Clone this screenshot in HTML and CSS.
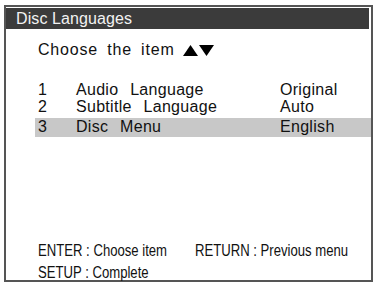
FILE: index.html
```html
<!DOCTYPE html>
<html>
<head>
<meta charset="utf-8">
<link rel="stylesheet" href="styles.css">
</head>
<body>
<div class="screen">
  <div class="titlebar">Disc Languages</div>
  <div class="prompt">Choose the item <span class="arrows"><svg width="32" height="13" viewBox="0 0 32 13"><polygon points="0,12 7.5,1 15,12" fill="#000"/><polygon points="16,1 31,1 23.5,12" fill="#000"/></svg></span></div>
  <div class="rows">
    <div class="row"><span class="num">1</span><span class="label">Audio Language</span><span class="value">Original</span></div>
    <div class="row"><span class="num">2</span><span class="label">Subtitle Language</span><span class="value">Auto</span></div>
    <div class="row selected"><span class="num">3</span><span class="label">Disc Menu</span><span class="value">English</span></div>
  </div>
  <div class="footer">
    <div class="fline"><span class="fa"><span class="narrow">ENTER : Choose item</span></span><span class="fb"><span class="narrow">RETURN : Previous menu</span></span></div>
    <div class="fline"><span class="fa"><span class="narrow">SETUP : Complete</span></span></div>
  </div>
</div>
</body>
</html>
```
FILE: styles.css
```css
html, body {
  margin: 0;
  padding: 0;
  background: #fff;
}
body {
  font-family: "Liberation Sans", Arial, sans-serif;
  color: #111;
}
.screen {
  margin: 5px 3px 0 4px;
  width: 365px;
  height: 273px;
  border: 2px solid #555;
  display: flex;
  flex-direction: column;
}
.titlebar {
  margin: 1px 2px 0 0;
  height: 21px;
  background: #3b3b3b;
  color: #f2f2f2;
  font-size: 16px;
  line-height: 21px;
  padding-left: 10px;
  letter-spacing: 0.1px;
}
.prompt {
  margin-top: 12px;
  padding-left: 32px;
  font-size: 16px;
  line-height: 18px;
  letter-spacing: 0.8px;
  word-spacing: 4px;
  display: flex;
  align-items: center;
}
.arrows {
  display: inline-flex;
  margin-left: 8px;
}
.rows {
  margin-top: 22px;
  margin-left: 29px;
  font-size: 16px;
  letter-spacing: 0.3px;
  word-spacing: 7px;
}
.row {
  display: flex;
  height: 17px;
  line-height: 17px;
  padding-left: 3px;
}
.row.selected {
  background: #c8c8c8;
  height: 19px;
  margin-top: 3px;
}
.num { width: 38px; }
.label { width: 204px; }
.footer {
  margin-top: auto;
  margin-bottom: -4px;
  padding-left: 32px;
  font-size: 16px;
  line-height: 22px;
}
.fline {
  display: flex;
  white-space: nowrap;
}
.fa { width: 163px; }
.narrow {
  display: inline-block;
  transform: scaleX(0.82);
  transform-origin: left center;
}
```
